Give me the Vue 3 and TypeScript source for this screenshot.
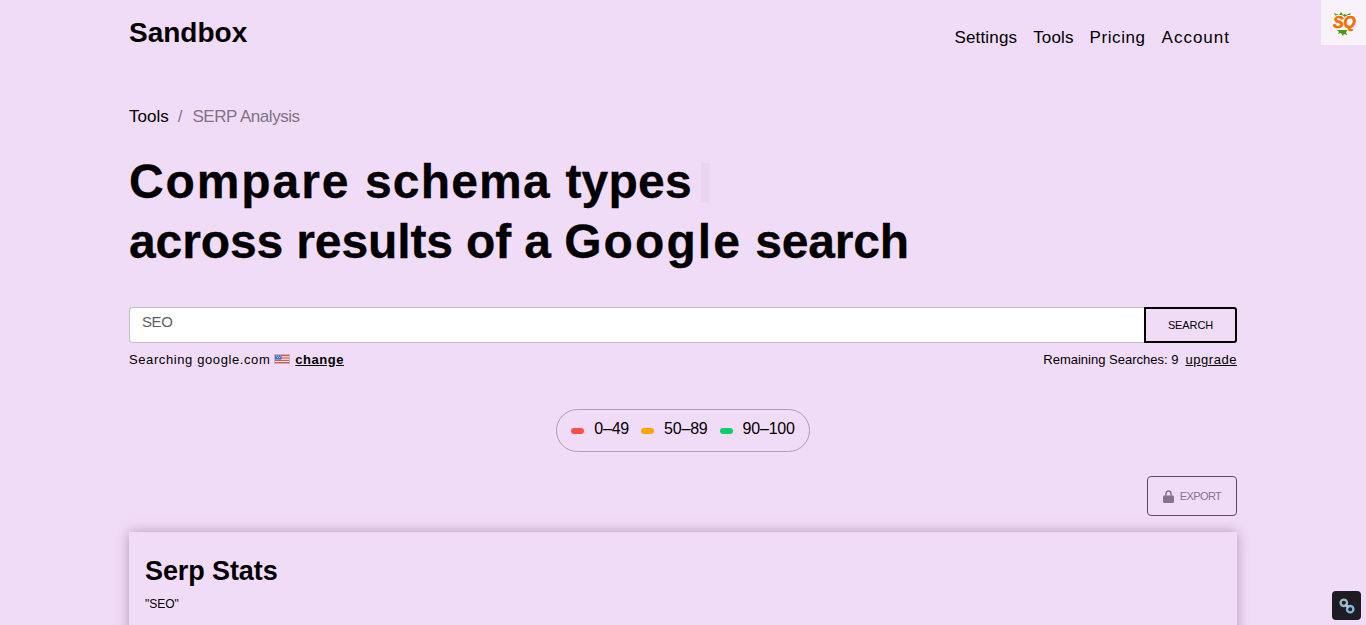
<script setup lang="ts">
const navLinks: string[] = ['Settings', 'Tools', 'Pricing', 'Account']
const ranges = [
  { label: '0–49', color: '#ff4e42' },
  { label: '50–89', color: '#ffa400' },
  { label: '90–100', color: '#0cce6b' },
]
</script>

<template>
  <div class="page">
    <div class="wrap">
      <header class="top">
        <div class="brand">Sandbox</div>
        <nav class="nav">
          <a v-for="l in navLinks" :key="l">{{ l }}</a>
        </nav>
      </header>

      <div class="crumbs">
        <span>Tools</span><span class="sep">/</span><span class="muted">SERP Analysis</span>
      </div>

      <h1 class="title">
        <span class="line first"><span class="w-compare">Compare</span> schema <span class="w-types">types</span><i class="cursor"></i></span>
        <span class="line second">across results of a <span class="w-google">Google</span> <span class="w-search">search</span></span>
      </h1>

      <div class="search">
        <div class="input">SEO</div>
        <button class="go">SEARCH</button>
      </div>
      <div class="meta">
        <div class="meta-left">
          <span class="searching">Searching google.com</span>
          <svg class="flag" width="16" height="10" viewBox="0 0 16 10">
            <rect width="16" height="10" fill="#f4eef6" />
            <rect x="0.5" y="0.5" width="15" height="9" fill="none" stroke="#b9b4c4" stroke-width="1" />
            <rect x="1" y="1" width="14" height="1.2" fill="#e0524a" />
            <rect x="1" y="3.4" width="14" height="1.2" fill="#e0524a" />
            <rect x="1" y="5.8" width="14" height="1.2" fill="#e0524a" />
            <rect x="1" y="8" width="14" height="1" fill="#e0524a" />
            <rect x="1" y="1" width="6.5" height="4.6" fill="#4a6fc0" />
            <path d="M2 2h1M4 2h1M6 2h.8M3 3.5h1M5 3.5h1" stroke="#fff" stroke-width="0.7" />
          </svg>
          <a class="change">change</a>
        </div>
        <div class="meta-right">
          <span>Remaining Searches: 9</span>
          <a class="upgrade">upgrade</a>
        </div>
      </div>

      <div class="legend-row">
        <div class="legend">
          <div v-for="r in ranges" :key="r.label" class="legend-item">
            <i class="dot" :style="{ background: r.color }"></i>
            <span class="legend-label">{{ r.label }}</span>
          </div>
        </div>
      </div>

      <div class="export-row">
        <button class="export">
          <svg width="11" height="13" viewBox="0 0 11 13">
            <path d="M3 6V3.6a2.5 2.5 0 0 1 5 0V6" fill="none" stroke="#85758c" stroke-width="1.5" />
            <rect x="0" y="5.5" width="11" height="7.5" rx="1.2" fill="#85758c" />
          </svg>
          <span>EXPORT</span>
        </button>
      </div>

      <section class="card">
        <h2>Serp Stats</h2>
        <p>"SEO"</p>
      </section>
    </div>

    <div class="sq">
      <svg width="24" height="26" viewBox="0 0 24 26">
        <path d="M3 3l5 2 2-3 2 3 2-1 1 1 5-2-2 4-1 2H6z" fill="#4c9a10" />
        <path d="M6 20h11l-2 2 1 3-3-1-1 2-2-3-3 1 1-2z" fill="#4c9a10" />
      </svg>
      <span class="sq-text">SQ</span>
    </div>

    <div class="link-btn">
      <svg width="20" height="20" viewBox="0 0 20 20">
        <circle cx="6.8" cy="6.8" r="3.2" fill="none" stroke="#9fb2c4" stroke-width="2.4" />
        <circle cx="13.2" cy="13.2" r="3.2" fill="none" stroke="#7fb4de" stroke-width="2.4" />
        <path d="M8.5 8.5l3 3" stroke="#b4c6d6" stroke-width="2.4" />
      </svg>
    </div>
  </div>
</template>

<style>
html, body { margin: 0; height: 100%; overflow: hidden; background: #f1dcf8; }
</style>

<style scoped>
.page {
  position: relative;
  height: 625px;
  overflow: hidden;
  background: #f1dcf8;
  color: #000;
  font-family: "Liberation Sans", Arial, sans-serif;
}
.wrap { width: 1108px; margin: 0 auto; }
.top { display: flex; justify-content: space-between; height: 74px; }
.brand { font-size: 28px; font-weight: 700; line-height: 32px; padding-top: 17px; }
.nav { display: flex; gap: 16px; padding: 28px 7px 0 0; font-size: 17px; line-height: 20px; letter-spacing: 0.15px; }
.nav a:nth-child(3) { letter-spacing: 0.57px; }
.nav a:nth-child(4) { letter-spacing: 1px; }
.crumbs { display: flex; margin-top: 33px; font-size: 17px; line-height: 20px; height: 20px; }
.sep { margin: 0 10px 0 9px; color: #7c7484; }
.muted { color: #7c7484; letter-spacing: -0.45px; }
.title { margin: 25px 0 0; font-size: 48px; line-height: 60px; font-weight: 700; -webkit-text-stroke: 0.3px #000; }
.line { display: block; height: 60px; }
.first { letter-spacing: 1.2px; }
.second { letter-spacing: -0.12px; }
.w-compare { letter-spacing: 1.9px; }
.w-types { letter-spacing: 0.2px; }
.w-google { letter-spacing: 2.1px; }
.w-search { letter-spacing: -0.2px; }
.cursor { display: inline-block; width: 9px; height: 40px; margin-left: 9px; vertical-align: -5px; background: #e9d5f0; -webkit-text-stroke: 0; }
.search { display: flex; margin-top: 35px; height: 36px; }
.input {
  flex: 1; box-sizing: border-box; background: #fff; border: 1px solid #c4bcc8; border-right: 0;
  border-radius: 4px 0 0 4px; padding: 4px 12px; font-size: 15px; line-height: 20px; color: #5f5f5f; letter-spacing: -0.4px;
}
.go {
  width: 93px; box-sizing: border-box; border: 2px solid #000; border-radius: 0 3px 3px 0; background: transparent;
  font: 11px "Liberation Sans", Arial, sans-serif; letter-spacing: -0.1px; color: #000; padding: 0;
}
.meta { display: flex; justify-content: space-between; margin-top: 9px; font-size: 13px; line-height: 16px; }
.meta-left { display: flex; align-items: center; }
.searching { letter-spacing: 0.6px; }
.flag { margin: 0 5px 3px 4px; }
.change { font-weight: 700; text-decoration: underline; letter-spacing: 0.5px; }
.meta-right { display: flex; }
.upgrade { margin-left: 7px; text-decoration: underline; letter-spacing: 0.55px; }
.legend-row { display: flex; justify-content: center; margin-top: 41px; }
.legend {
  display: flex; align-items: center; gap: 12px; box-sizing: border-box; height: 43px; padding: 0 14px 2px;
  border: 1px solid #a99fad; border-radius: 22px; font-size: 16px; letter-spacing: -0.2px;
}
.legend-item { display: flex; align-items: center; gap: 10px; }
.legend-label { margin-bottom: 2px; }
.dot { width: 13px; height: 6px; border-radius: 3px; margin-top: 2px; }
.export-row { display: flex; justify-content: flex-end; margin-top: 24px; }
.export {
  display: flex; align-items: center; gap: 6px; box-sizing: border-box; width: 90px; height: 40px; justify-content: center;
  border: 1px solid #5d4a63; border-radius: 4px; background: transparent; color: #85758c;
  font: 11px "Liberation Sans", Arial, sans-serif; letter-spacing: -0.6px; padding: 0;
}
.card {
  margin-top: 16px; height: 200px; box-sizing: border-box; padding: 22px 16px; background: #f1dcf8;
  box-shadow: 0 0 12px rgba(60, 30, 70, 0.35);
}
.card h2 { margin: 0; font-size: 27px; line-height: 34px; font-weight: 700; letter-spacing: -0.1px; }
.card p { margin: 9px 0 0; font-size: 12px; line-height: 14px; }
.sq {
  position: absolute; top: 0; right: 0; width: 45px; height: 45px; background: #f8f2fa;
}
.sq svg { position: absolute; left: 10px; top: 10px; }
.sq-text {
  position: absolute; left: 12px; top: 13px; font: italic 700 16px/20px "Liberation Sans", sans-serif; color: #f56e00;
  letter-spacing: -0.5px; -webkit-text-stroke: 0.6px #f56e00;
  text-shadow: 1px 1px 0 #fff, -1px -1px 0 #fff, 1px -1px 0 #fff, -1px 1px 0 #fff;
}
.link-btn {
  position: absolute; right: 5px; bottom: 5px; width: 29px; height: 29px; border-radius: 4px; background: #1c1c22;
  display: flex; align-items: center; justify-content: center;
}
</style>
